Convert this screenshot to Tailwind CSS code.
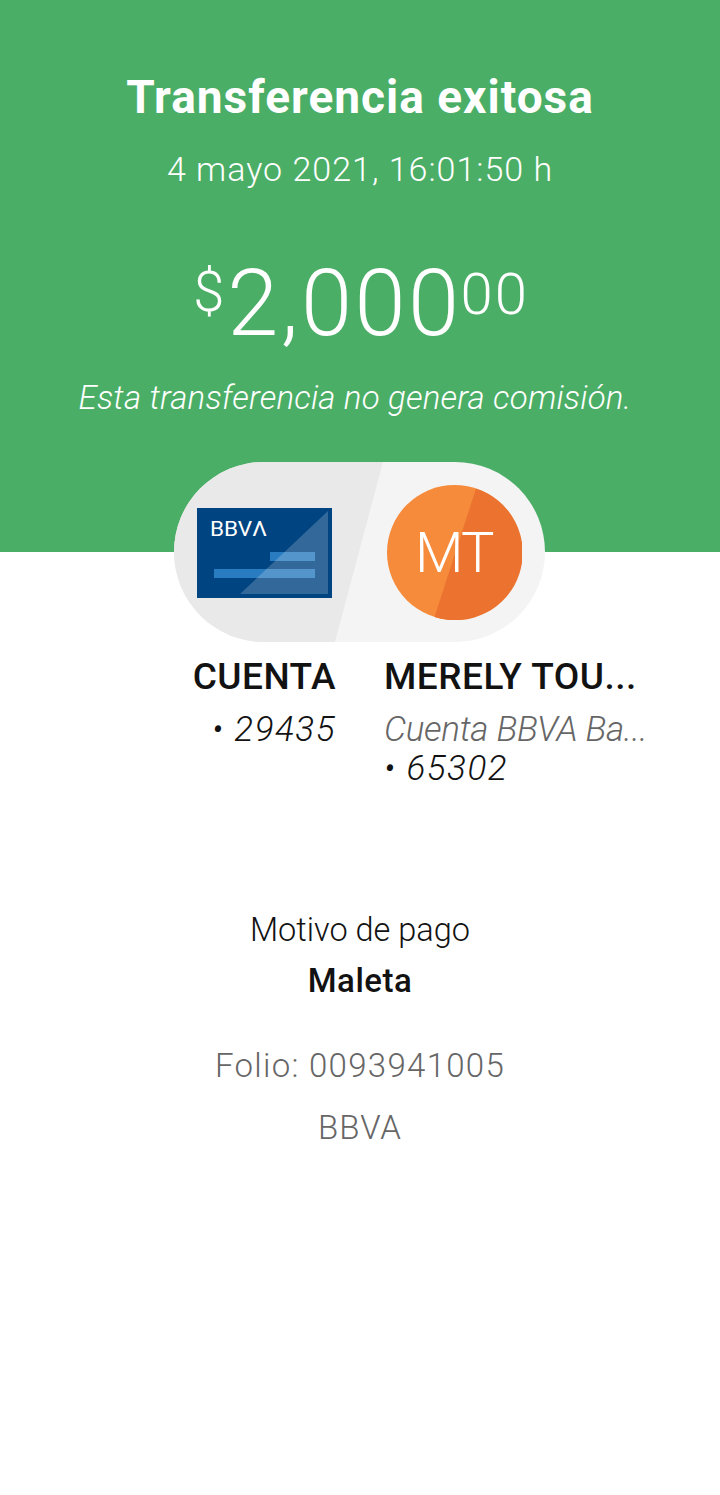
<!DOCTYPE html>
<html lang="es">
<head>
    <meta charset="UTF-8">
    <meta name="viewport" content="width=device-width, initial-scale=1.0">
    <title>Transferencia exitosa</title>
    <script src="https://cdn.jsdelivr.net/npm/@tailwindcss/browser@4"></script>
</head>
<body class="bg-white font-['Roboto',sans-serif] text-[#121212]">
    <div class="flex flex-col items-center min-h-[1495px]">
        <!-- Header -->
        <header class="w-full h-[552px] bg-[#4bae66] text-white flex flex-col items-center pt-[72px]">
            <h1 class="text-[46px] leading-[50px] font-bold tracking-[1px]">Transferencia exitosa</h1>
            <p class="mt-[27px] text-[34px] leading-[40px] font-light tracking-[1px]">4 mayo 2021, 16:01:50 h</p>
            <div class="mt-[67px] ml-[2px] flex items-start font-light h-[96px]">
                <span class="text-[56px] leading-[60px] mt-[6px] mr-[3px]">$</span>
                <span class="text-[92px] leading-[96px] tracking-[2.5px]">2,000</span>
                <span class="text-[58px] leading-[60px] mt-[8px] -ml-[1px] tracking-[2px]">00</span>
            </div>
            <p class="mt-[26px] mr-[10px] text-[33px] leading-[40px] font-light italic tracking-[0.2px]">Esta transferencia no genera comisión.</p>
        </header>

        <!-- Pill -->
        <div class="relative self-start ml-[174px] -mt-[90px] w-[371px] h-[180px] rounded-full bg-[#f4f4f4] overflow-hidden flex items-center pl-[23px] gap-[55px]">
            <div class="absolute inset-0 bg-[#e9e9e9] [clip-path:polygon(0_0,209px_0,161px_180px,0_180px)]"></div>
            <svg class="relative shrink-0 mt-[2px]" width="135" height="90" viewBox="0 0 135 90">
                <rect width="135" height="90" fill="#004481"/>
                <rect x="73" y="44" width="45" height="9" fill="#2a7cc0"/>
                <rect x="17" y="61" width="101" height="9" fill="#2a7cc0"/>
                <path d="M131 3V86H43Z" fill="#fff" fill-opacity="0.2"/>
                <text x="13" y="28" fill="#fff" font-size="21" font-family="Roboto, sans-serif" textLength="57" lengthAdjust="spacingAndGlyphs">BBVΛ</text>
            </svg>
            <svg class="relative shrink-0" width="135" height="135" viewBox="0 0 135 135">
                <circle cx="67.5" cy="67.5" r="67.5" fill="#f68b3c"/>
                <path d="M89 3.5A67.5 67.5 0 0 1 47.5 132Z" fill="#eb732f"/>
                <text x="67" y="87" text-anchor="middle" fill="#fff" font-size="56" font-weight="300" letter-spacing="-1.5" font-family="Roboto, sans-serif">MT</text>
            </svg>
        </div>

        <!-- Accounts -->
        <div class="w-full grid grid-cols-[336px_1fr] gap-x-[48px] mt-[13px]">
            <div class="text-right">
                <p class="text-[37px] leading-[44px] font-medium tracking-[0.5px]">CUENTA</p>
                <p class="mt-[11px] text-[35px] leading-[39px] font-light italic tracking-[1.5px]">• 29435</p>
            </div>
            <div>
                <p class="text-[37px] leading-[44px] font-medium tracking-[0.5px]">MERELY TOU...</p>
                <p class="mt-[11px] text-[35px] leading-[39px] font-light italic tracking-[-0.3px] text-[#666666]">Cuenta BBVA Ba...</p>
                <p class="text-[35px] leading-[39px] font-light italic tracking-[1.5px]">• 65302</p>
            </div>
        </div>

        <!-- Details -->
        <div class="flex flex-col items-center mt-[122px] text-[33px] leading-[40px]">
            <p class="font-light text-[32.5px]">Motivo de pago</p>
            <p class="mt-[11px] font-medium tracking-[0.5px]">Maleta</p>
            <p class="mt-[45px] font-light text-[#666666] tracking-[1.3px]">Folio: 0093941005</p>
            <p class="mt-[22px] font-light text-[#666666] tracking-[1px]">BBVA</p>
        </div>
    </div>
</body>
</html>
